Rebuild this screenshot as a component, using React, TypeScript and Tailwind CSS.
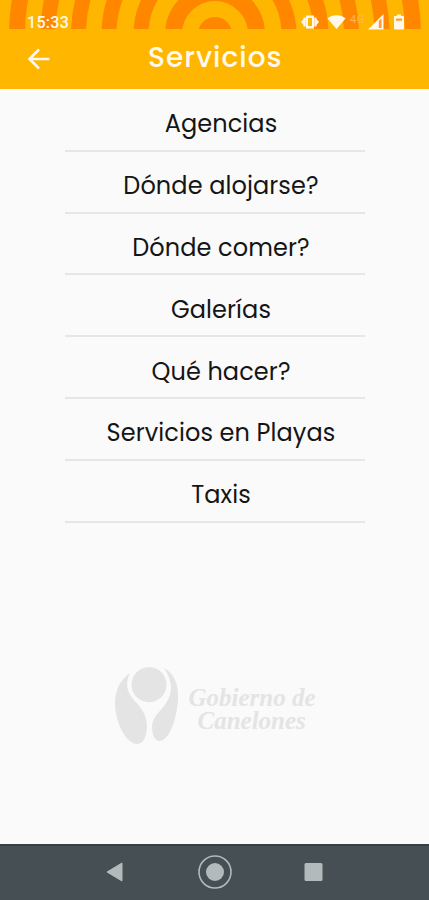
const services = [
  'Agencias',
  'Dónde alojarse?',
  'Dónde comer?',
  'Galerías',
  'Qué hacer?',
  'Servicios en Playas',
  'Taxis',
]

// Sun rings drawn behind the status bar
const rings = [
  { r: 41.5, w: 17 },
  { r: 74, w: 15 },
  { r: 106, w: 15 },
  { r: 136.5, w: 15 },
  { r: 167, w: 15 },
  { r: 198, w: 16 },
]

function Rings() {
  return (
    <svg width="429" height="29" viewBox="0 0 429 29" className="absolute top-0 left-0">
      <circle cx="215" cy="34" r="17" fill="#ff8700" />
      {rings.map((ring) => (
        <circle key={ring.r} cx="215" cy="34" r={ring.r} fill="none" stroke="#ff8700" strokeWidth={ring.w} />
      ))}
    </svg>
  )
}

function StatusIcons() {
  return (
    <div className="flex items-center pb-px">
      {/* Vibration */}
      <svg width="18" height="16" viewBox="0 0 18 16" fill="#fff8ec">
        <path fillRule="evenodd" d="M5 1.500h8v13H5zM7 4v8h4V4z" />
        <path d="M2.500 3.500h2.200v9H2.500zM13.300 3.500h2.200v9h-2.200zM0 8l2.500-3v6zM18 8l-2.500-3v6z" />
      </svg>
      {/* Wifi */}
      <svg width="19" height="16" viewBox="0 0 19 16" className="ml-2" fill="#fff8ec">
        <path d="M.5 4.500C5.500.3 13.500.3 18.500 4.500L9.500 15z" />
      </svg>
      <span className="ml-1 h-4 w-[18px] font-['Roboto',sans-serif] text-[11px] leading-3 tracking-[0.5px] text-[#ffb45e]">
        4G
      </span>
      {/* Signal */}
      <svg width="16" height="16" viewBox="0 0 16 16">
        <path d="M0 15.500L15.500 0v15.500z" fill="#fff8ec" />
        <path d="M10.800 7l2.700-2.700v9.700h-2.700z" fill="#ff9a35" />
      </svg>
      {/* Battery */}
      <svg width="10" height="16" viewBox="0 0 10 16" className="ml-2.5">
        <path d="M0 3q0-1 1-1h2V.5h4V2h2q1 0 1 1v11.500q0 1-1 1H1q-1 0-1-1z" fill="#fff8ec" />
        <path d="M2 4.500h6v2.300H2z" fill="#ffa02b" />
      </svg>
    </div>
  )
}

function Logo() {
  return (
    <div className="flex w-[200px] text-[#e4e4e4]">
      <svg width="64" height="80" viewBox="0 0 64 80" className="shrink-0" fill="currentColor">
        <circle cx="34" cy="19.700" r="17.500" />
        <path d="M15 8C4 16 0 26 0 40c1 20 12 39 22 39 7 0 10-9 10-19-1-16-12-22-16-29-5-7-5-15-1-23z" />
        <path d="M49 3c10 5 15 17 14 31-1 22-10 42-18 42-6 0-8-7-8-15 1-11 9-14 14-23 6-8 8-20-2-35z" />
      </svg>
      <div className="ml-2.5 pt-[21px] font-['Liberation_Serif',serif] text-[25px] leading-[23px] font-bold whitespace-nowrap italic">
        <p>Gobierno de</p>
        <p className="pl-[9px]">Canelones</p>
      </div>
    </div>
  )
}

export default function App() {
  return (
    <div className="flex h-[900px] w-[429px] flex-col overflow-hidden bg-[#fafafa] font-['Poppins','Lato',sans-serif]">
      <header className="relative h-[89px] bg-[#ffb600] text-[#fff8ec]">
        <Rings />
        <div className="relative flex h-[31px] items-end justify-between pr-[25px] pl-[27px]">
          <span className="font-['Roboto',sans-serif] text-base leading-4 font-medium tracking-[0.3px]">15:33</span>
          <StatusIcons />
        </div>
        <div className="flex h-14 items-center">
          <svg width="24" height="24" viewBox="0 0 24 24" className="ml-[27px] shrink-0">
            <path d="M22.500 12H2.500M12 2.500L2.500 12l9.500 9.500" fill="none" stroke="currentColor" strokeWidth="2.600" />
          </svg>
          <h1 className="ml-[97px] pb-0.5 text-[28px] leading-none font-medium tracking-[1px]">Servicios</h1>
        </div>
      </header>

      <main className="flex flex-1 flex-col items-center pt-px">
        <ul className="w-[300px]">
          {services.map((name) => (
            <li
              key={name}
              className="flex h-[61.8px] items-center justify-center border-b-2 border-[#e6e6e6] pt-[9px] pl-[13px] text-2xl tracking-[0.1px] text-[#151515]"
            >
              {name}
            </li>
          ))}
        </ul>
        <div className="mt-[142px]">
          <Logo />
        </div>
      </main>

      <nav className="flex h-14 items-center justify-center border-t-2 border-[#343e43] bg-[#464f54]">
        <svg width="220" height="36" viewBox="0 0 220 36" fill="#b3babc">
          <path d="M2 17l15-9v18z" stroke="#b3babc" strokeLinejoin="round" />
          <circle cx="110" cy="17" r="9" />
          <circle cx="110" cy="17" r="16" fill="none" stroke="#b3babc" strokeWidth="1.600" />
          <rect x="199.500" y="8" width="18" height="18" rx="1.500" />
        </svg>
      </nav>
    </div>
  )
}
